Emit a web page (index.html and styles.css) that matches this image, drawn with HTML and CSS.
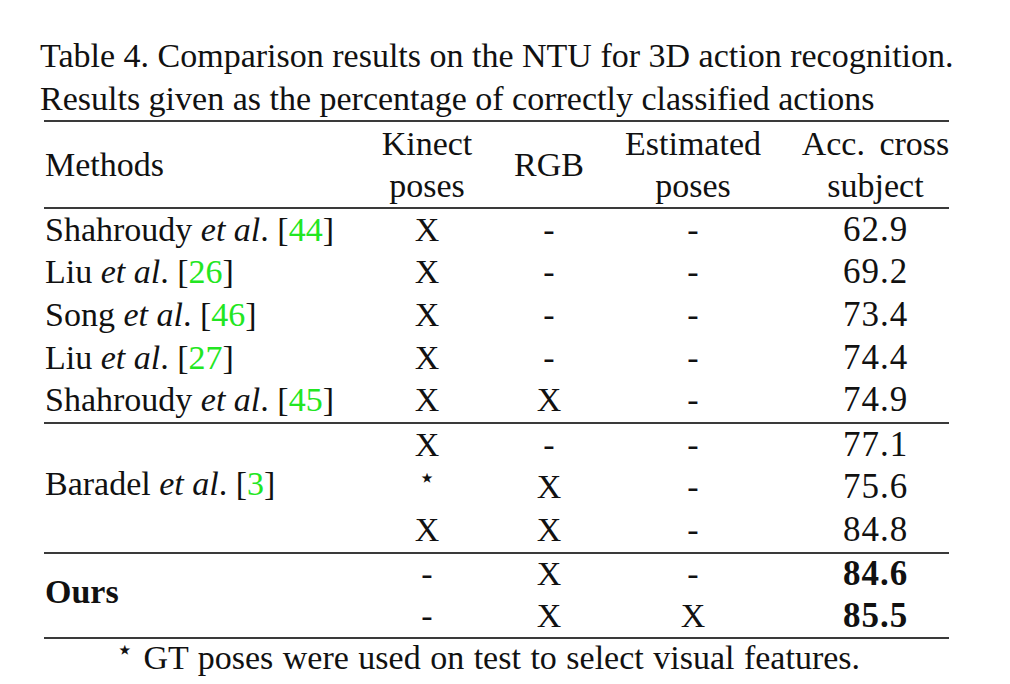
FILE: index.html
```html
<!DOCTYPE html>
<html>
<head>
<meta charset="utf-8">
<link rel="stylesheet" href="styles.css">
</head>
<body>
<div class="page">
  <p class="caption">Table 4. Comparison results on the NTU for 3D action recognition.<br>Results given as the percentage of correctly classified actions</p>
  <div class="table">
    <div class="row head">
      <div class="cell left"><span>Methods</span></div>
      <div class="cell"><span>Kinect<br>poses</span></div>
      <div class="cell"><span>RGB</span></div>
      <div class="cell"><span>Estimated<br>poses</span></div>
      <div class="cell acc"><span class="accs">Acc. cross<br>subject</span></div>
    </div>
    <div class="group g1">
      <div class="cell left"><span>Shahroudy <i>et al</i>. [<span class="ref">44</span>]</span></div><div class="cell">X</div><div class="cell">-</div><div class="cell">-</div><div class="cell acc num">62.9</div>
      <div class="cell left"><span>Liu <i>et al</i>. [<span class="ref">26</span>]</span></div><div class="cell">X</div><div class="cell">-</div><div class="cell">-</div><div class="cell acc num">69.2</div>
      <div class="cell left"><span>Song <i>et al</i>. [<span class="ref">46</span>]</span></div><div class="cell">X</div><div class="cell">-</div><div class="cell">-</div><div class="cell acc num">73.4</div>
      <div class="cell left"><span>Liu <i>et al</i>. [<span class="ref">27</span>]</span></div><div class="cell">X</div><div class="cell">-</div><div class="cell">-</div><div class="cell acc num">74.4</div>
      <div class="cell left"><span>Shahroudy <i>et al</i>. [<span class="ref">45</span>]</span></div><div class="cell">X</div><div class="cell">X</div><div class="cell">-</div><div class="cell acc num">74.9</div>
    </div>
    <div class="group g2">
      <div class="cell left span3"><span>Baradel <i>et al</i>. [<span class="ref">3</span>]</span></div>
      <div class="cell">X</div><div class="cell">-</div><div class="cell">-</div><div class="cell acc num">77.1</div>
      <div class="cell"><span class="star">⋆</span></div><div class="cell">X</div><div class="cell">-</div><div class="cell acc num">75.6</div>
      <div class="cell">X</div><div class="cell">X</div><div class="cell">-</div><div class="cell acc num">84.8</div>
    </div>
    <div class="group g3">
      <div class="cell left span2"><span><b>Ours</b></span></div>
      <div class="cell">-</div><div class="cell">X</div><div class="cell">-</div><div class="cell acc num"><b>84.6</b></div>
      <div class="cell">-</div><div class="cell">X</div><div class="cell">X</div><div class="cell acc num"><b>85.5</b></div>
    </div>
  </div>
  <p class="note"><span class="nstar">⋆</span>GT poses were used on test to select visual features.</p>
</div>
</body>
</html>
```

FILE: styles.css
```css
html, body {
  margin: 0;
  padding: 0;
  background: #ffffff;
}

.page {
  padding: 34px 0 0 40px;
  font-family: "Liberation Serif", "Times New Roman", serif;
  color: #111111;
  font-size: 34px;
}

.caption {
  margin: 0;
  line-height: 43px;
  white-space: nowrap;
}

.table {
  margin-left: 4px;
  width: 905px;
  border-top: 2px solid #3a3a3a;
  border-bottom: 2px solid #3a3a3a;
}

.row,
.group {
  display: grid;
  grid-template-columns: 326px 114px 130px 158px 177px;
}

.head {
  height: 85px;
  border-bottom: 2px solid #3a3a3a;
}

.g1 {
  grid-template-rows: repeat(5, 42.6px);
}

.g2 {
  border-top: 2px solid #3a3a3a;
  grid-template-rows: repeat(3, 42.67px);
}

.g3 {
  border-top: 2px solid #3a3a3a;
  grid-template-rows: repeat(2, 41.5px);
}

.cell {
  display: flex;
  align-items: center;
  justify-content: center;
  text-align: center;
  white-space: nowrap;
}

.head .cell {
  line-height: 42px;
}

.group .cell {
  line-height: 40px;
  padding-bottom: 1px;
}

.cell.left {
  justify-content: flex-start;
  text-align: left;
  padding-left: 1px;
}

.cell.acc {
  padding-left: 30px;
}

.accs {
  word-spacing: 6px;
}

.num {
  font-size: 35px;
  letter-spacing: 1px;
}

.span3 {
  grid-row: span 3;
  padding-bottom: 8px;
}

.group .span2 {
  grid-row: span 2;
  padding-bottom: 6px;
}

.group .span3 {
  padding-bottom: 8px;
}

.ref {
  color: #22e622;
}

.star {
  font-family: "DejaVu Sans", sans-serif;
  font-size: 28px;
  line-height: 1;
  position: relative;
  top: -9px;
}

.note {
  margin: 0 0 0 4px;
  padding-left: 72px;
  width: 833px;
  text-align: left;
  line-height: 38px;
  white-space: nowrap;
  word-spacing: 1px;
}

.nstar {
  font-family: "DejaVu Sans", sans-serif;
  font-size: 28px;
  position: relative;
  top: -10px;
  margin-right: 10px;
}
```
